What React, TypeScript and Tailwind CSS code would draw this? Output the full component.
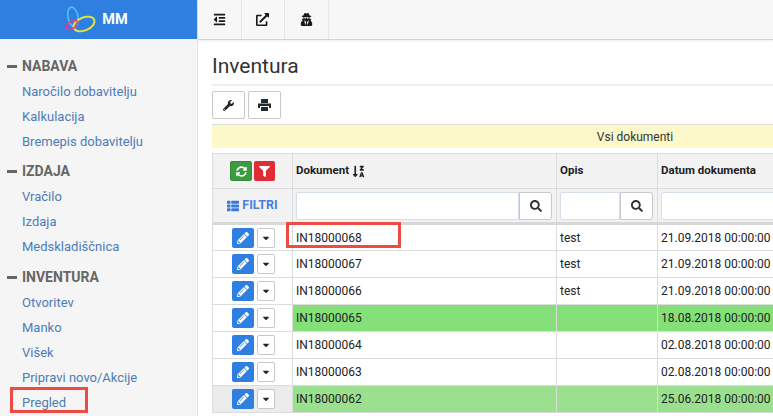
import React from "react";
import {
  FaCaretDown,
  FaExternalLinkAlt,
  FaFilter,
  FaOutdent,
  FaPencilAlt,
  FaSearch,
  FaSortAlphaDownAlt,
  FaSyncAlt,
  FaThList,
  FaUserSecret,
  FaWrench,
} from "react-icons/fa";

const menu = [
  { title: "NABAVA", items: ["Naročilo dobavitelju", "Kalkulacija", "Bremepis dobavitelju"] },
  { title: "IZDAJA", items: ["Vračilo", "Izdaja", "Medskladiščnica"] },
  { title: "INVENTURA", items: ["Otvoritev", "Manko", "Višek", "Pripravi novo/Akcije", "Pregled"] },
];

const rows = [
  { doc: "IN18000068", opis: "test", datum: "21.09.2018 00:00:00", color: "" },
  { doc: "IN18000067", opis: "test", datum: "21.09.2018 00:00:00", color: "" },
  { doc: "IN18000066", opis: "test", datum: "21.09.2018 00:00:00", color: "" },
  { doc: "IN18000065", opis: "", datum: "18.08.2018 00:00:00", color: "bg-[#85e07a]" },
  { doc: "IN18000064", opis: "", datum: "02.08.2018 00:00:00", color: "" },
  { doc: "IN18000063", opis: "", datum: "02.08.2018 00:00:00", color: "" },
  { doc: "IN18000062", opis: "", datum: "25.06.2018 00:00:00", color: "bg-[#9be08f]", hover: true },
];

const Logo = () => (
  <svg width="34" height="32" viewBox="0 0 34 32" fill="none">
    <ellipse cx="10" cy="13" rx="5" ry="10" transform="rotate(-12 10 13)" stroke="#4fc3f0" strokeWidth="1.6" />
    <ellipse cx="21" cy="20" rx="11" ry="6.5" transform="rotate(-22 21 20)" stroke="#d8e04a" strokeWidth="2" />
    <ellipse cx="9" cy="21" rx="6.5" ry="3.5" transform="rotate(-30 9 21)" stroke="#e8379a" strokeWidth="1.6" />
  </svg>
);

const PrintIcon = () => (
  <svg width="13" height="12" viewBox="0 0 13 12" fill="#1f2a33">
    <path d="M3 0h7v4H3z" />
    <path d="M0 4.5h13V9h-2V7H2v2H0z" />
    <path d="M3 8h7v4H3z" />
  </svg>
);

const Sidebar = () => (
  <aside className="w-[198px] shrink-0 bg-[#f5f5f5] border-r border-[#e4e4e4] h-full flex flex-col">
    <div className="h-[39px] bg-[#2e7fdf] flex items-center justify-center gap-[5px] pr-[6px] shrink-0">
      <Logo />
      <span className="text-white font-bold text-[14.5px]">MM</span>
    </div>
    <nav className="pt-[17px] flex flex-col gap-[7.5px]">
      {menu.map((group) => (
        <div key={group.title}>
          <div className="h-[20px] flex items-center pl-[7px] gap-[5px] text-[#666666] font-bold text-[14px]">
            <span className="w-[10px] h-[3px] bg-[#666666]" />
            <span>{group.title}</span>
          </div>
          <ul className="pt-[3px]">
            {group.items.map((item) => (
              <li key={item} className="h-[25px] flex items-center pl-[22px] text-[13px] text-[#4d7cb8]">
                {item}
              </li>
            ))}
          </ul>
        </div>
      ))}
    </nav>
  </aside>
);

const Toolbar = () => (
  <div className="h-[40px] shrink-0 bg-[#f7f7f7] border-b border-[#d4d4d4] shadow-[0_1px_2px_rgba(0,0,0,0.08)] flex">
    {[FaOutdent, FaExternalLinkAlt, FaUserSecret].map((Icon, i) => (
      <div key={i} className="w-[43.5px] h-full flex items-center justify-center border-r border-[#e6e6e6] text-[#1a1a1a] text-[13px]">
        <Icon />
      </div>
    ))}
  </div>
);

const SearchInput = ({ width }: { width: string }) => (
  <div className={`flex h-[28px] ${width}`}>
    <div className="flex-1 min-w-0 bg-white border border-[#d5dfeb] rounded-l-[2px]" />
    <div className="w-[33px] shrink-0 bg-white border border-[#c8c8c8] rounded-r-[3px] flex items-center justify-center text-[#333] text-[12px]">
      <FaSearch />
    </div>
  </div>
);

const Grid = () => (
  <table className="w-[600px] table-fixed border-collapse text-[12px] text-[#222]">
    <colgroup>
      <col className="w-[80px]" />
      <col className="w-[264px]" />
      <col className="w-[101px]" />
      <col className="w-[155px]" />
    </colgroup>
    <thead className="bg-[#f2f2f2]">
      <tr className="h-[35px] font-bold text-left">
        <th className="border border-[#dcdcdc] text-center">
          <div className="flex justify-center gap-[2px]">
            <span className="w-[22px] h-[20px] bg-[#3c9a41] border border-[#348a39] rounded-[2px] text-white text-[11px] flex items-center justify-center">
              <FaSyncAlt />
            </span>
            <span className="w-[21px] h-[20px] bg-[#e12c36] rounded-[2px] text-white text-[11px] flex items-center justify-center">
              <FaFilter />
            </span>
          </div>
        </th>
        <th className="border border-[#dcdcdc] pl-[3px] text-[11.5px] font-bold">
          <span className="flex items-center gap-[3px]">
            Dokument <FaSortAlphaDownAlt className="text-[13px]" />
          </span>
        </th>
        <th className="border border-[#dcdcdc] pl-[3px] text-[11.5px] font-bold">Opis</th>
        <th className="border border-[#dcdcdc] pl-[3px] text-[11.5px] font-bold">Datum dokumenta</th>
      </tr>
      <tr className="h-[35px] border-b-[3px] border-[#d8d8d8]">
        <th className="border border-[#dcdcdc] border-b-[3px] border-b-[#d8d8d8]">
          <span className="flex items-center justify-center gap-[3px] text-[#4a7fe0] text-[12.5px] font-bold">
            <FaThList className="text-[#3c78d8] text-[12px]" /> FILTRI
          </span>
        </th>
        <th className="border border-[#dcdcdc] border-b-[3px] border-b-[#d8d8d8] pl-[3px]">
          <SearchInput width="w-[256px]" />
        </th>
        <th className="border border-[#dcdcdc] border-b-[3px] border-b-[#d8d8d8] pl-[3px]">
          <SearchInput width="w-[93px]" />
        </th>
        <th className="border border-[#dcdcdc] border-b-[3px] border-b-[#d8d8d8] pl-[3px]">
          <div className="w-[150px] h-[28px] bg-white border border-[#d5dfeb] rounded-l-[2px]" />
        </th>
      </tr>
    </thead>
    <tbody>
      {rows.map((r) => (
        <tr key={r.doc} className={`h-[27px] ${r.hover ? "bg-[#ececec]" : "bg-white"}`}>
          <td className="border border-[#dcdcdc]">
            <div className="flex justify-center gap-[3px] pl-[1px]">
              <span className="w-[22px] h-[20px] bg-[#2e7fdf] rounded-[2px] text-white text-[12px] flex items-center justify-center">
                <FaPencilAlt />
              </span>
              <span className="w-[18px] h-[20px] bg-white border border-[#c8c8c8] rounded-[2px] text-[#222] text-[10px] flex items-center justify-center">
                <FaCaretDown />
              </span>
            </div>
          </td>
          <td className={`border border-[#dcdcdc] pl-[3px] ${r.color}`}>{r.doc}</td>
          <td className={`border border-[#dcdcdc] pl-[3px] ${r.color}`}>{r.opis}</td>
          <td className={`border border-[#dcdcdc] pl-[3px] whitespace-nowrap ${r.color}`}>{r.datum}</td>
        </tr>
      ))}
    </tbody>
  </table>
);

const App: React.FC = () => {
  return (
    <div className="relative w-[773px] h-[416px] overflow-hidden bg-white flex font-['Roboto',sans-serif]">
      <Sidebar />
      <main className="flex-1 min-w-0 flex flex-col">
        <Toolbar />
        <div className="pl-[14px] pt-[12px] flex flex-col">
          <h1 className="text-[21px] leading-[28px] text-[#333] font-normal border-b-2 border-[#eeeeee] pb-[4px]">Inventura</h1>
          <div className="flex gap-[3px] pt-[5px]">
            <span className="w-[33px] h-[28px] bg-white border border-[#c8c8c8] rounded-[2px] flex items-center justify-center text-[#222] text-[11px]">
              <FaWrench />
            </span>
            <span className="w-[33px] h-[28px] bg-white border border-[#c8c8c8] rounded-[2px] flex items-center justify-center">
              <PrintIcon />
            </span>
          </div>
          <div className="mt-[5px] h-[24px] bg-[#fcf8c9] border-t border-[#dddddd] flex items-center justify-center text-[12px] text-[#333] w-[846px] shrink-0">
            Vsi dokumenti
          </div>
          <div className="pt-[5px]">
            <Grid />
          </div>
        </div>
      </main>
      {/* annotation boxes on top of the screenshot */}
      <div className="absolute left-[286px] top-[222px] w-[115px] h-[26px] border-[3px] border-[#ee4b45]" />
      <div className="absolute left-[10px] top-[387px] w-[78px] h-[26px] border-[3px] border-[#ee4b45]" />
    </div>
  );
};

export default App;
